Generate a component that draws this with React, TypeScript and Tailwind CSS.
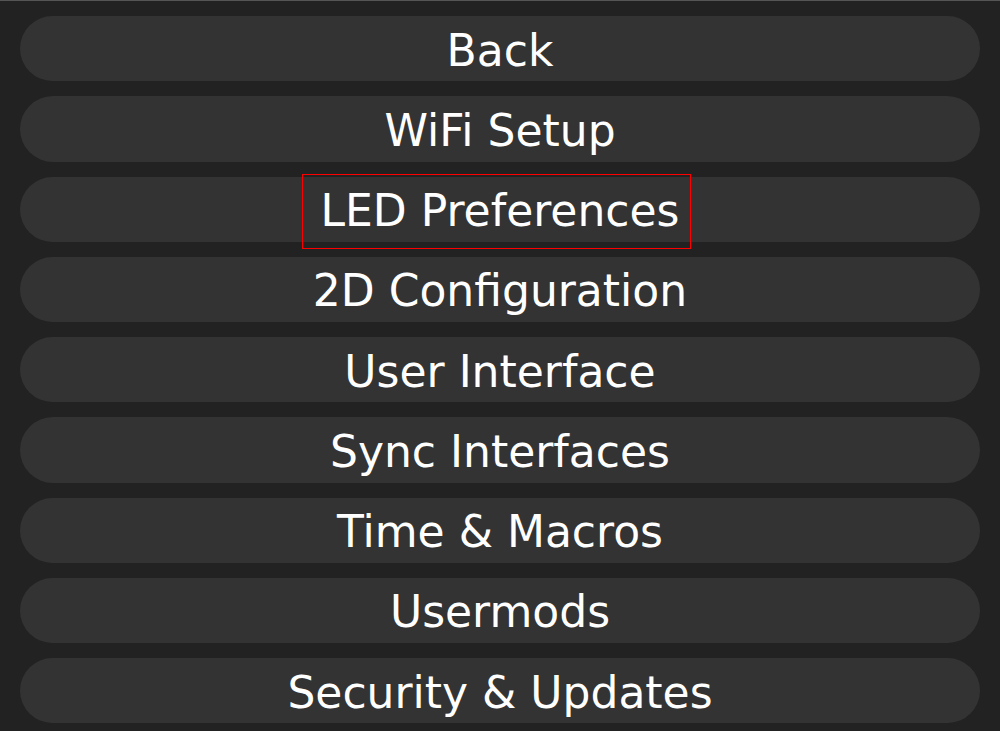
export default function App() {
  const items = [
    "Back",
    "WiFi Setup",
    "LED Preferences",
    "2D Configuration",
    "User Interface",
    "Sync Interfaces",
    "Time & Macros",
    "Usermods",
    "Security & Updates",
  ];

  return (
    <div
      className="min-h-screen bg-[#222] border-t border-[#555] px-5 pb-4"
      style={{ fontFamily: '"DejaVu Sans", Verdana, sans-serif' }}
    >
      {items.map((label) => (
        <button
          key={label}
          className="relative mt-[15px] flex h-[65.25px] w-full items-center justify-center rounded-full bg-[#333] pt-[4px] text-[44px] leading-none text-white"
        >
          <span className="relative">
            {label}
            {label === "LED Preferences" && (
              <span className="absolute -left-[19px] -right-[12px] -top-[15px] -bottom-[16px] border border-[#f00]" />
            )}
          </span>
        </button>
      ))}
    </div>
  );
}
